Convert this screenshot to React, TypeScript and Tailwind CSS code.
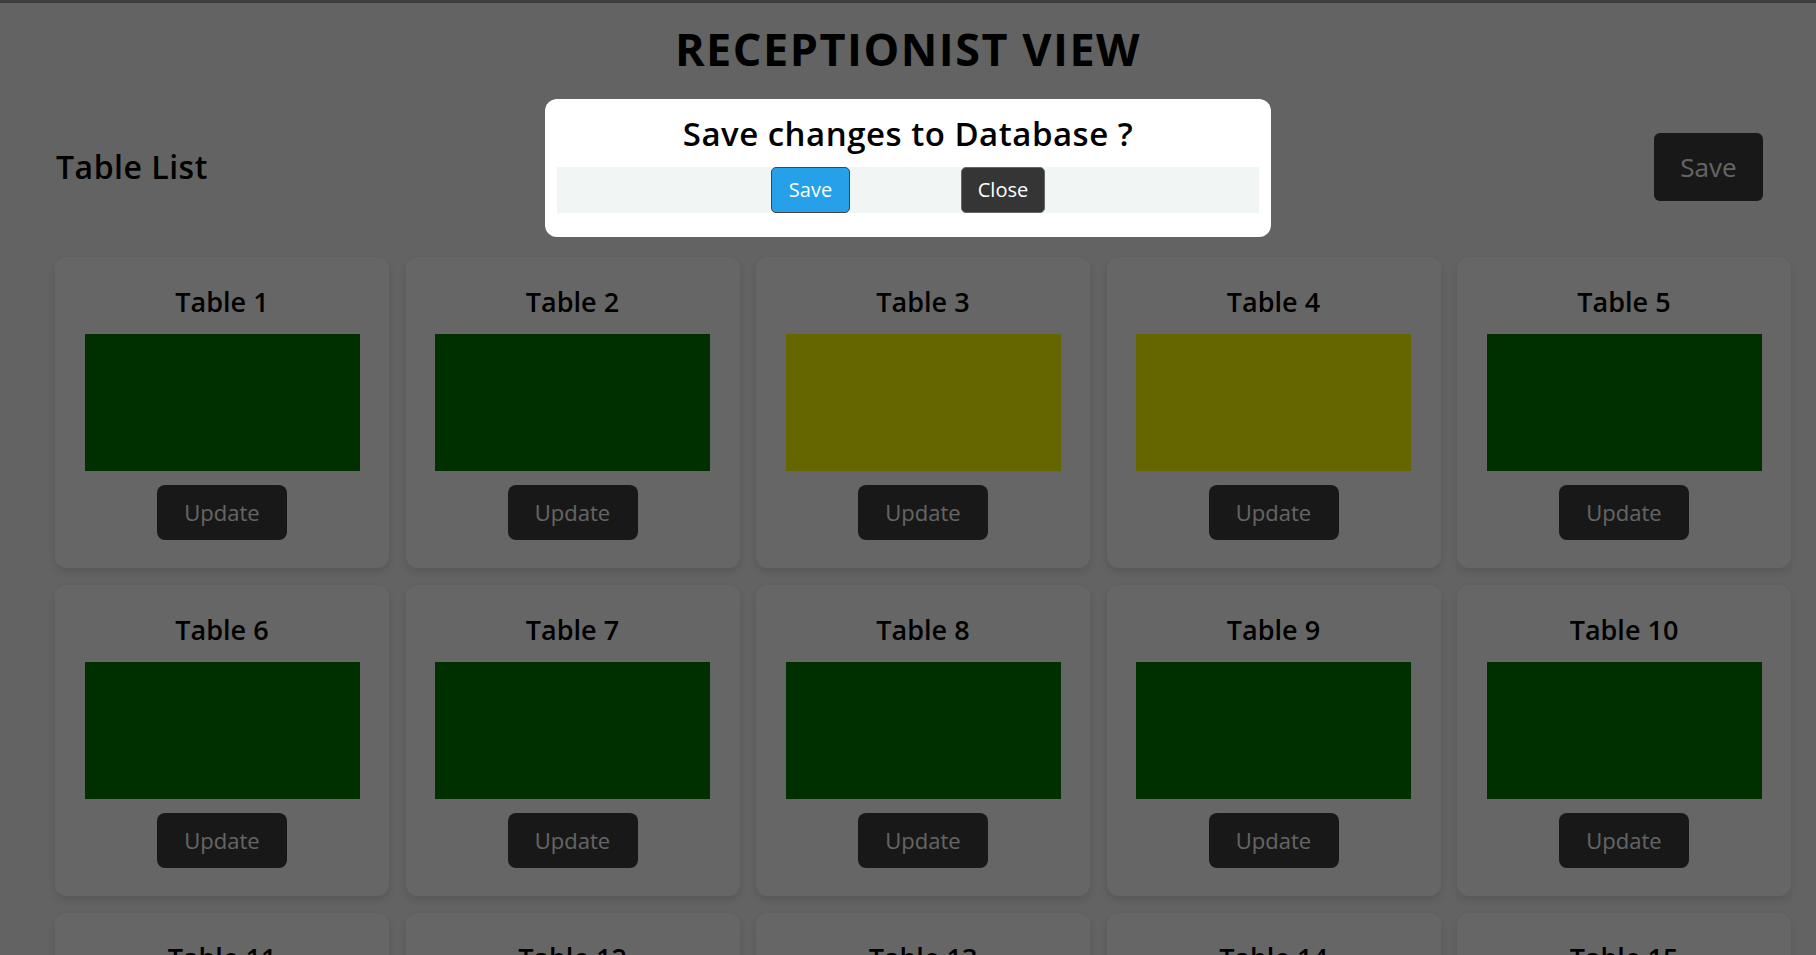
const TABLES = Array.from({ length: 15 }, (_, i) => ({
  id: i + 1,
  status: i === 2 || i === 3 ? "reserved" : "free",
}));

function TableCard({ id, status }: { id: number; status: string }) {
  return (
    <div className="flex flex-col items-center rounded-xl bg-white pt-[27px] pb-[28px] shadow-[0_4px_10px_rgba(0,0,0,0.12)]">
      <h3 className="text-[27px] leading-[36px] font-semibold text-black">
        Table {id}
      </h3>
      <div
        className={`mt-[14px] h-[137px] w-[275px] ${
          status === "reserved" ? "bg-[#ffff00]" : "bg-[#007800]"
        }`}
      />
      <button className="mt-[14px] h-[55px] w-[130px] rounded-lg bg-[#3c3c3c] text-[22px] text-[#fafafa]">
        Update
      </button>
    </div>
  );
}

export default function App() {
  return (
    <div
      className="relative min-h-screen bg-[#f5f8f5]"
      style={{ fontFamily: '"Open Sans", "Noto Sans", sans-serif' }}
    >
      <div className="h-[3px] bg-[#96989b]" />

      <h1 className="pt-[18px] text-center text-[45px] leading-[56px] font-bold tracking-[1.5px] text-black">
        RECEPTIONIST VIEW
      </h1>

      {/* Header */}
      <div className="mt-[56px] flex items-center justify-between pl-[56px] pr-[53px]">
        <h2 className="text-[32px] font-semibold tracking-[0.5px] text-black">Table List</h2>
        <button className="h-[68px] w-[109px] rounded-md bg-[#3c3c3c] text-[26px] text-[#fafafa]">
          Save
        </button>
      </div>

      {/* Tables */}
      <div className="mt-[56px] ml-[55px] grid w-[1736px] grid-cols-5 gap-x-[16.5px] gap-y-[17px] pb-10">
        {TABLES.map((t) => (
          <TableCard key={t.id} id={t.id} status={t.status} />
        ))}
      </div>

      {/* Modal */}
      <div className="fixed inset-0 bg-black/60" />
      <div className="fixed top-[99px] left-1/2 w-[726px] -translate-x-1/2 rounded-xl bg-white px-[12px] pt-[12px] pb-[24px]">
        <h2 className="text-center text-[33px] leading-[46px] font-semibold tracking-[0.5px] text-black">
          Save changes to Database ?
        </h2>
        <div className="mt-[10px] flex h-[46px] justify-center gap-[111px] bg-[#f1f5f3]">
          <button className="h-full w-[79px] rounded-[5px] border border-[#444] bg-[#27a0ea] text-[20px] text-white">
            Save
          </button>
          <button className="h-full w-[84px] rounded-[5px] border border-[#666] bg-[#353535] text-[20px] text-white">
            Close
          </button>
        </div>
      </div>
    </div>
  );
}
